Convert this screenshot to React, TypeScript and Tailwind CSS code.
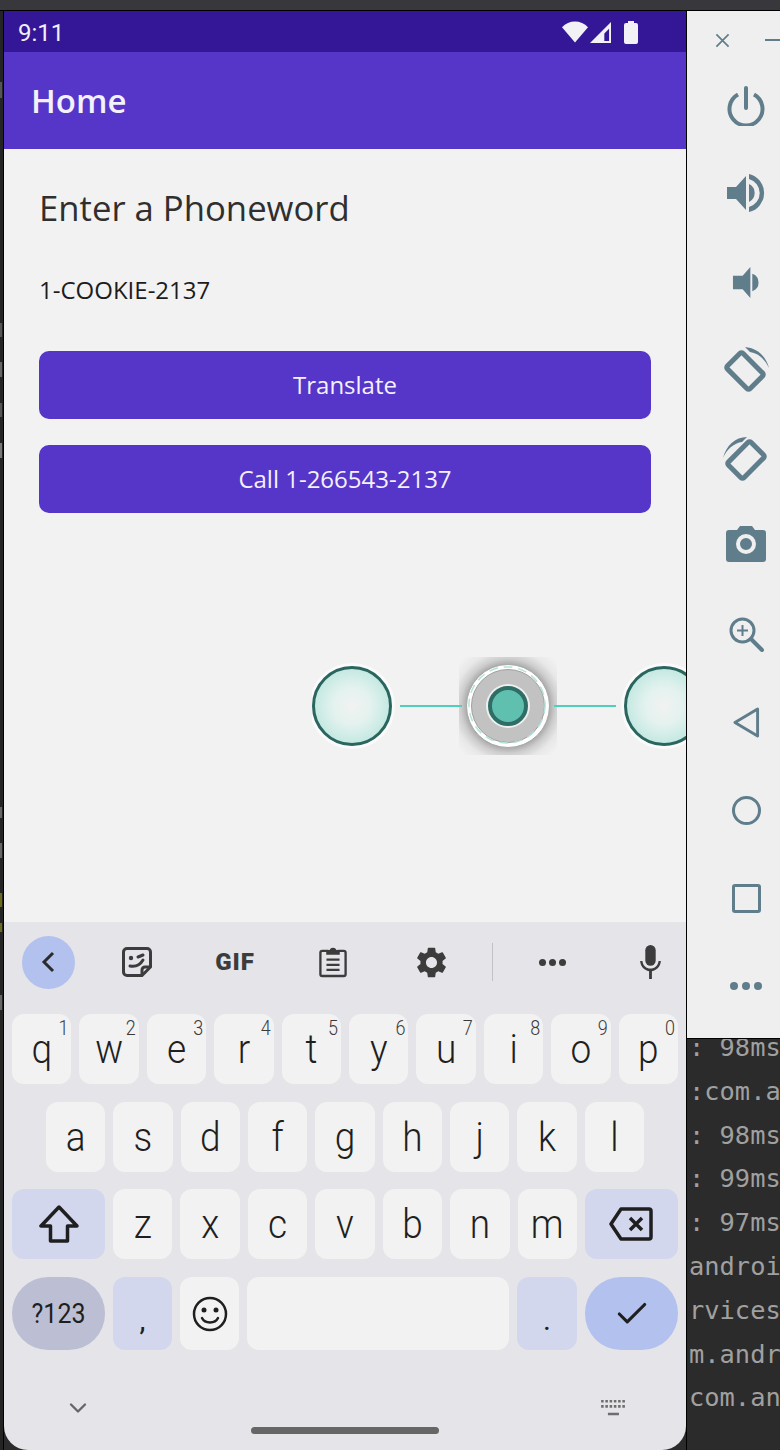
import React from 'react';
import { Check, ChevronDown } from 'lucide-react';

const GEAR =
  'M19.14 12.94c.04-.3.06-.61.06-.94 0-.32-.02-.64-.07-.94l2.03-1.58a.49.49 0 0 0 .12-.61l-1.92-3.32a.488.488 0 0 0-.59-.22l-2.39.96c-.5-.38-1.03-.7-1.62-.94l-.36-2.54a.484.484 0 0 0-.48-.41h-3.84c-.24 0-.43.17-.47.41l-.36 2.54c-.59.24-1.13.57-1.62.94l-2.39-.96c-.22-.08-.47 0-.59.22L2.74 8.87c-.12.21-.08.47.12.61l2.03 1.58c-.05.3-.09.63-.09.94s.02.64.07.94l-2.03 1.58a.49.49 0 0 0-.12.61l1.92 3.32c.12.22.37.29.59.22l2.39-.96c.5.38 1.03.7 1.62.94l.36 2.54c.05.24.24.41.48.41h3.84c.24 0 .44-.17.47-.41l.36-2.54c.59-.24 1.13-.56 1.62-.94l2.39.96c.22.08.47 0 .59-.22l1.92-3.32c.12-.22.07-.47-.12-.61l-2.01-1.58zM12 15.6c-1.98 0-3.6-1.62-3.6-3.6s1.62-3.6 3.6-3.6 3.6 1.62 3.6 3.6-1.62 3.6-3.6 3.6z';

const sideBtn = 'flex items-center justify-center text-[#607d8b] w-[46px]';

const SidePanel = () => (
  <div className="h-[1027px] w-[93px] bg-[#efefef] overflow-hidden shrink-0">
    <div className="flex h-[58px] items-center pl-[28px] gap-[35px] text-[#607d8b]">
      <svg viewBox="0 0 16 16" className="w-[15px] h-[15px] shrink-0" stroke="currentColor" strokeWidth="1.8">
        <path d="M1.5 1.5l13 13M14.5 1.5l-13 13" />
      </svg>
      <div className="w-[16px] h-[2px] bg-[#607d8b] shrink-0" />
    </div>
    <div className="flex flex-col pl-[36px] -mt-[2px]">
      <div className={`${sideBtn} h-[78px]`}>
        <svg viewBox="0 0 40 40" className="w-[40px] h-[40px]" fill="none" stroke="currentColor" strokeWidth="4">
          <path d="M20 2v20" strokeLinecap="round" />
          <path d="M12 8.5a16.5 16.5 0 1 0 16 0" />
        </svg>
      </div>
      <div className={`${sideBtn} h-[96px]`}>
        <svg viewBox="0 0 40 40" className="w-[40px] h-[40px]" fill="currentColor">
          <path d="M1 14h9L20 3v34L10 26H1zM23 11a10 10 0 0 1 0 18zM23 1a19.5 19.5 0 0 1 0 38v-5a14.5 14.5 0 0 0 0-28z" />
        </svg>
      </div>
      <div className={`${sideBtn} h-[82px]`}>
        <svg viewBox="0 0 30 34" className="w-[29px] h-[33px]" fill="currentColor">
          <path d="M1 10h10L19 1v32l-8-9H1zM21 8a9.500 9.500 0 0 1 0 18z" />
        </svg>
      </div>
      <div className={`${sideBtn} h-[94px]`}>
        <svg viewBox="0 0 46 46" className="w-[46px] h-[46px]">
          <rect x="-16" y="-11" width="32" height="22" rx="2" transform="translate(22 24) rotate(45)" fill="none" stroke="currentColor" strokeWidth="5" />
          <path d="M22 0C34 1 43 9 46 21 42 12 35 6 27 5z" fill="currentColor" />
        </svg>
      </div>
      <div className={`${sideBtn} h-[84px]`}>
        <svg viewBox="0 0 46 46" className="w-[46px] h-[46px]">
          <rect x="-16" y="-11" width="32" height="22" rx="2" transform="translate(23 24) rotate(-45)" fill="none" stroke="currentColor" strokeWidth="5" />
          <path d="M24 1C12 1 3 10 0 22 4 13 11 7 19 6z" fill="currentColor" />
        </svg>
      </div>
      <div className={`${sideBtn} h-[86px]`}>
        <svg viewBox="0 0 40 36" className="w-[40px] h-[36px]" fill="currentColor">
          <path fillRule="evenodd" d="M3 4h8l3-4h12l3 4h8a3 3 0 0 1 3 3v26a3 3 0 0 1-3 3H3a3 3 0 0 1-3-3V7a3 3 0 0 1 3-3zM20 8a10 10 0 1 0 0 20 10 10 0 0 0 0-20zM20 12a6 6 0 1 1 0 12 6 6 0 0 1 0-12z" />
        </svg>
      </div>
      <div className={`${sideBtn} h-[94px]`}>
        <svg viewBox="0 0 36 36" className="w-[36px] h-[36px]" fill="none" stroke="currentColor" strokeWidth="3">
          <circle cx="14.5" cy="14.5" r="11.5" />
          <path d="M9 14.5h11M14.5 9v11" strokeWidth="2" />
          <path d="M23 23l11 11" strokeWidth="4" strokeLinecap="round" />
        </svg>
      </div>
      <div className={`${sideBtn} h-[82px]`}>
        <svg viewBox="0 0 28 32" className="w-[27px] h-[31px]" fill="none" stroke="currentColor" strokeWidth="3" strokeLinejoin="round">
          <path d="M25.5 2v28L2 16z" />
        </svg>
      </div>
      <div className={`${sideBtn} h-[94px]`}>
        <div className="w-[29px] h-[29px] rounded-full border-[3px] border-[#607d8b]" />
      </div>
      <div className={`${sideBtn} h-[82px]`}>
        <div className="w-[29px] h-[29px] rounded-[3px] border-[3px] border-[#607d8b]" />
      </div>
      <div className={`${sideBtn} h-[94px] gap-[4px]`}>
        <div className="w-[8px] h-[8px] rounded-full bg-[#607d8b]" />
        <div className="w-[8px] h-[8px] rounded-full bg-[#607d8b]" />
        <div className="w-[8px] h-[8px] rounded-full bg-[#607d8b]" />
      </div>
    </div>
  </div>
);

const logLines = [': 98ms', ':com.a', ': 98ms', ': 99ms', ': 97ms', 'androi', 'rvices', 'm.andr', 'com.an'];

const Terminal = () => (
  <div className="flex-1 min-h-0 bg-[#2b2b2b] overflow-hidden pl-[2px] font-['DejaVu_Sans_Mono',monospace] text-[25.4px] leading-[43.8px] text-[#a0a0a0] whitespace-pre">
    <div className="-mt-[13px]">
      {logLines.map((l, i) => (
        <div key={i}>{l}</div>
      ))}
    </div>
  </div>
);

// clipped letters of the window behind the emulator, [gap above, height, colour]
const edgeMarks: [number, number, string][] = [
  [71, 16, '#555555'],
  [225, 14, '#555555'],
  [25, 15, '#666666'],
  [26, 14, '#555555'],
  [26, 15, '#777777'],
  [349, 11, '#666666'],
  [25, 15, '#666666'],
  [35, 14, '#6b6b1e'],
  [16, 9, '#6b6b1e'],
  [63, 15, '#666666'],
];

const LeftEdge = () => (
  <div className="w-[4px] shrink-0 bg-[#242424] border-r border-black flex flex-col">
    {edgeMarks.map(([gap, h, c], i) => (
      <div key={i} className="w-[2px] shrink-0" style={{ marginTop: gap, height: h, backgroundColor: c }} />
    ))}
  </div>
);

const Node = () => (
  <div className="w-[80px] h-[80px] shrink-0 rounded-full border-[3px] border-[#2a655f] bg-[radial-gradient(circle_closest-side,#f1f2f2_0%,#e4f2ef_50%,#c5e9e2_100%)] shadow-[0_0_0_3px_#fafafa]" />
);

const PressedNode = () => (
  <div className="w-[98px] h-[98px] shrink-0 -mx-[3px] flex items-center justify-center bg-[radial-gradient(circle,#a4a4a4_58%,#cdcdcd_68%,#e8e8e8_80%,#f2f2f3_95%)]">
    <div className="w-[84px] h-[84px] rounded-full bg-white border border-[#a8a8a8] flex items-center justify-center relative">
      <svg viewBox="0 0 84 84" className="absolute inset-0 w-full h-full">
        <circle cx="41" cy="41" r="39" fill="none" stroke="#b5e2da" strokeWidth="1.5" strokeDasharray="9 6" />
      </svg>
      <div className="w-[74px] h-[74px] rounded-full bg-[#c2c2c2] border border-[#a0a0a0] flex items-center justify-center">
        <div className="w-[44px] h-[44px] rounded-full bg-[#efefef] flex items-center justify-center">
          <div className="w-[40px] h-[40px] rounded-full bg-[#60c0b0] border-[4px] border-[#2f6e66]" />
        </div>
      </div>
    </div>
  </div>
);

const Line = () => <div className="w-[62px] h-[2px] shrink-0 bg-[#4fd0bc] relative z-10" />;

const Key: React.FC<{ label: string; num?: string }> = ({ label, num }) => (
  <div className="flex-1 h-[70px] rounded-[12px] bg-[#f2f2f2] relative flex items-center justify-center text-[37px] text-[#1f1f1f] font-['Roboto',sans-serif] font-light">
    <span className="leading-none scale-y-110">{label}</span>
    {num && <span className="absolute top-[4px] right-[3px] text-[18px] leading-[20px] text-[#3a3a3a] font-light scale-y-110">{num}</span>}
  </div>
);

const row1: [string, string][] = [['q', '1'], ['w', '2'], ['e', '3'], ['r', '4'], ['t', '5'], ['y', '6'], ['u', '7'], ['i', '8'], ['o', '9'], ['p', '0']];

const ToolSlot: React.FC<{ children: React.ReactNode }> = ({ children }) => (
  <div className="w-[98px] shrink-0 flex items-center justify-center">{children}</div>
);

const Keyboard = () => (
  <div className="flex-1 bg-[#e5e4e8] rounded-b-[24px] overflow-hidden font-['Roboto',sans-serif]">
    {/* toolbar */}
    <div className="h-[92px] pb-[12px] pl-[18px] flex items-center text-[#3c3c3c]">
      <div className="w-[53px] h-[53px] shrink-0 pr-[2px] rounded-full bg-[#b3c1ef] flex items-center justify-center">
        <svg viewBox="0 0 14 22" className="w-[14px] h-[22px]" fill="none" stroke="#2b2b2b" strokeWidth="3">
          <path d="M12 2L3 11l9 9" />
        </svg>
      </div>
      <div className="w-[13px] shrink-0" />
      <ToolSlot>
        <svg viewBox="0 0 32 32" fill="none" className="w-[32px] h-[32px]">
          <path d="M6 2.5h20a3.5 3.5 0 0 1 3.5 3.5v15L21 29.5H6A3.5 3.5 0 0 1 2.5 26V6A3.5 3.5 0 0 1 6 2.5z" stroke="#3c3c3c" strokeWidth="3" />
          <path d="M21 29v-5a3 3 0 0 1 3-3h5" stroke="#3c3c3c" strokeWidth="3" />
          <circle cx="10" cy="12" r="2.2" fill="#3c3c3c" />
          <path d="M17 11l5-2M9 20c5 1 10-1 13-6" stroke="#3c3c3c" strokeWidth="3" strokeLinecap="round" />
        </svg>
      </ToolSlot>
      <ToolSlot>
        <span className="text-[24px] leading-none font-black tracking-[1px] text-[#3c3c3c]">GIF</span>
      </ToolSlot>
      <ToolSlot>
        <svg viewBox="0 0 30 34" fill="none" stroke="#3c3c3c" strokeWidth="2.5" className="w-[28px] h-[32px]">
          <path d="M10 5H3.500a2 2 0 0 0-2 2v23a2 2 0 0 0 2 2h23a2 2 0 0 0 2-2V7a2 2 0 0 0-2-2H20" />
          <path d="M9 8V5.500h3.500a2.500 2.500 0 0 1 5 0H21V8z" fill="#3c3c3c" />
          <path d="M8 14.500h14M8 20h14M8 25.500h14" />
        </svg>
      </ToolSlot>
      <ToolSlot>
        <svg viewBox="0 0 24 24" className="w-[37px] h-[37px]" fill="#3c3c3c">
          <path d={GEAR} />
        </svg>
      </ToolSlot>
      <div className="ml-[12px] w-px h-[38px] shrink-0 bg-[#c2c2c4]" />
      <div className="w-[10px] shrink-0" />
      <ToolSlot>
        <div className="flex gap-[3px]">
          <div className="w-[7px] h-[7px] rounded-full bg-[#3c3c3c]" />
          <div className="w-[7px] h-[7px] rounded-full bg-[#3c3c3c]" />
          <div className="w-[7px] h-[7px] rounded-full bg-[#3c3c3c]" />
        </div>
      </ToolSlot>
      <ToolSlot>
        <svg viewBox="0 0 24 36" className="w-[25px] h-[34px]" fill="#3c3c3c">
          <rect x="6.5" y="0" width="11" height="22" rx="5.5" />
          <path d="M1 17h2.500c.5 5 4 8 8.500 8s8-3 8.500-8H23c-.5 6-4.500 10-9.500 10.700V36h-3v-8.300C5.500 27 1.500 23 1 17z" />
        </svg>
      </ToolSlot>
    </div>
    {/* keys */}
    <div className="px-2 flex flex-col gap-[18px]">
      <div className="flex gap-2">
        {row1.map(([l, n]) => <Key key={l} label={l} num={n} />)}
      </div>
      <div className="flex gap-2 px-[34px]">
        {['a', 's', 'd', 'f', 'g', 'h', 'j', 'k', 'l'].map((l) => <Key key={l} label={l} />)}
      </div>
      <div className="flex gap-2 -mt-[1px]">
        <div className="w-[93px] h-[70px] rounded-[12px] bg-[#d3d7ee] flex items-center justify-center shrink-0">
          <svg viewBox="0 0 40 38" className="w-[40px] h-[38px]" fill="none" stroke="#1f1f1f" strokeWidth="3.5" strokeLinejoin="round">
            <path d="M20 2L2 21h9.500v15h17V21H38z" />
          </svg>
        </div>
        {['z', 'x', 'c', 'v', 'b', 'n', 'm'].map((l) => <Key key={l} label={l} />)}
        <div className="w-[93px] h-[70px] rounded-[12px] bg-[#d3d7ee] flex items-center justify-center shrink-0">
          <svg viewBox="0 0 44 34" className="w-[44px] h-[34px]" fill="none" stroke="#1f1f1f" strokeWidth="3.5" strokeLinejoin="round">
            <path d="M12 2h28a2 2 0 0 1 2 2v26a2 2 0 0 1-2 2H12L2 17z" />
            <path d="M21 11l12 12M33 11L21 23" />
          </svg>
        </div>
      </div>
      <div className="flex gap-2">
        <div className="w-[93px] h-[73px] rounded-[36px] bg-[#bcbfd4] flex items-center justify-center shrink-0 text-[#1f1f1f]">
          <span className="text-[25px] scale-y-110">?123</span>
        </div>
        <div className="w-[59px] h-[73px] rounded-[12px] bg-[#d3d7ee] flex items-center justify-center shrink-0 text-[30px] pt-[12px] text-[#1f1f1f]">,</div>
        <div className="w-[59px] h-[73px] rounded-[12px] bg-[#f2f2f2] flex items-center justify-center shrink-0">
          <svg viewBox="0 0 36 36" className="w-[36px] h-[36px]" fill="none" stroke="#1f1f1f" strokeWidth="2.5">
            <circle cx="18" cy="18" r="16" />
            <circle cx="12" cy="14" r="2.5" fill="#1f1f1f" stroke="none" />
            <circle cx="24" cy="14" r="2.5" fill="#1f1f1f" stroke="none" />
            <path d="M10 22c3 6 13 6 16 0" strokeLinecap="round" />
          </svg>
        </div>
        <div className="flex-1 h-[73px] rounded-[12px] bg-[#f2f2f2]" />
        <div className="w-[60px] h-[73px] rounded-[12px] bg-[#d3d7ee] flex items-center justify-center shrink-0 text-[30px] pt-[12px] text-[#1f1f1f]">.</div>
        <div className="w-[93px] h-[73px] rounded-[36px] bg-[#b3c1ef] flex items-center justify-center shrink-0">
          <Check size={38} strokeWidth={2} className="text-[#1f1f1f]" />
        </div>
      </div>
    </div>
    {/* nav strip */}
    <div className="mt-[46px] px-[60px] flex items-center justify-between h-[24px]">
      <ChevronDown size={28} strokeWidth={2} className="text-[#666666]" />
      <svg viewBox="0 0 28 20" className="w-[26px] h-[17px]" fill="#6e6e6e">
        <path d="M0 0h3v3H0zM5 0h3v3H5zM10 0h3v3h-3zM15 0h3v3h-3zM20 0h3v3h-3zM25 0h3v3h-3zM0 6h3v3H0zM5 6h3v3H5zM10 6h3v3h-3zM15 6h3v3h-3zM20 6h3v3h-3zM25 6h3v3h-3zM8 15h13v3H8z" />
      </svg>
    </div>
    <div className="flex justify-center mt-[7px]">
      <div className="w-[188px] h-[7px] rounded-full bg-[#666666]" />
    </div>
  </div>
);

const Phone = () => (
  <div className="w-[682px] h-full flex flex-col font-['Open_Sans',sans-serif] overflow-hidden">
    <div className="h-[41px] bg-[#341796] flex items-center justify-between pl-[14px] pr-[48px] shrink-0">
      <span className="text-[24px] pt-[2px] text-[#f1effa] font-['Roboto',sans-serif]">9:11</span>
      <div className="flex items-center gap-[2px] pt-[1px]">
        <svg viewBox="0 0 27 22" className="w-[26px] h-[22px]" fill="#f2f1f6">
          <path d="M0 6C7-2 20-2 27 6L13.5 22z" />
        </svg>
        <svg viewBox="0 0 22 22" className="w-[21px] h-[21px]">
          <path d="M22 0v22H0z" fill="#f2f1f6" />
          <path d="M20 7v13h-5V12z" fill="#341796" />
        </svg>
        <svg viewBox="0 0 14 23" className="ml-[11px] w-[14px] h-[23px]" fill="#f2f1f6">
          <path d="M4 2V0h6v2h2a2 2 0 0 1 2 2v17a2 2 0 0 1-2 2H2a2 2 0 0 1-2-2V4a2 2 0 0 1 2-2z" />
        </svg>
      </div>
    </div>
    <div className="h-[97px] bg-[#5635c9] flex items-center pl-[27px] shrink-0">
      <span className="text-[33px] font-semibold text-[#f3f1fb] leading-none">Home</span>
    </div>
    <div className="h-[773px] bg-[#f2f2f3] px-[35px] pt-[37px] shrink-0 overflow-hidden">
      <div className="text-[34.7px] leading-[44px] text-[#2f2f2f] whitespace-nowrap">Enter a Phoneword</div>
      <div className="mt-[45px] text-[24px] leading-[30px] text-[#1c1c1c]">1-COOKIE-2137</div>
      <div className="mt-[46px] w-[612px] h-[68px] rounded-[10px] bg-[#5635c9] flex items-center justify-center text-[24px] text-[#f3f1fb]">Translate</div>
      <div className="mt-[26px] w-[612px] h-[68px] rounded-[10px] bg-[#5635c9] flex items-center justify-center text-[24px] text-[#f3f1fb]">Call 1-266543-2137</div>
      {/* pattern lock */}
      <div className="mt-[144px] ml-[273px] w-[374px] flex items-center overflow-hidden">
        <Node />
        <div className="w-[8px] shrink-0" />
        <Line />
        <PressedNode />
        <Line />
        <div className="w-[8px] shrink-0" />
        <Node />
      </div>
    </div>
    <Keyboard />
  </div>
);

export default function App() {
  return (
    <div className="w-[780px] h-[1450px] bg-[#2b2b2b] overflow-hidden flex flex-col">
      <div className="h-[10px] bg-[#38383c] shrink-0" />
      <div className="h-px bg-black shrink-0" />
      <div className="flex flex-1 min-h-0">
        <LeftEdge />
        <Phone />
        <div className="w-px bg-black shrink-0" />
        <div className="flex flex-col w-[93px]">
          <SidePanel />
          <div className="h-px bg-black shrink-0" />
          <Terminal />
        </div>
      </div>
    </div>
  );
}
